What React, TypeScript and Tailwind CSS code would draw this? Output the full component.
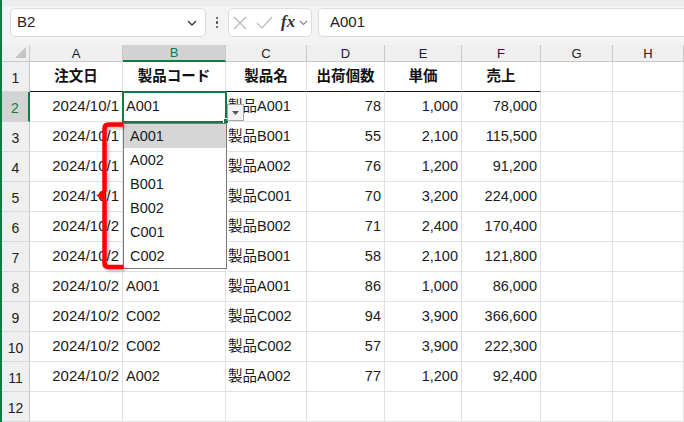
import React from "react";

const colWidths = ["w-[93px]", "w-[103px]", "w-[81px]", "w-[78px]", "w-[77px]", "w-[79px]", "w-[72px]", "w-[71px]"];
const letters = ["A", "B", "C", "D", "E", "F", "G", "H"];
const align = [
  "justify-end pr-[3px] text-[15px]",
  "justify-start pl-[3px] text-[14.5px]",
  "justify-start pl-[2px] text-[14.5px]",
  "justify-end pr-[3px] text-[14.5px]",
  "justify-end pr-[3px] text-[14.5px]",
  "justify-end pr-[3px] text-[14.5px]",
  "",
  "",
];

const header = ["注文日", "製品コード", "製品名", "出荷個数", "単価", "売上"];
const data: string[][] = [
  ["2024/10/1", "A001", "製品A001", "78", "1,000", "78,000"],
  ["2024/10/1", "", "製品B001", "55", "2,100", "115,500"],
  ["2024/10/1", "", "製品A002", "76", "1,200", "91,200"],
  ["2024/10/1", "", "製品C001", "70", "3,200", "224,000"],
  ["2024/10/2", "", "製品B002", "71", "2,400", "170,400"],
  ["2024/10/2", "", "製品B001", "58", "2,100", "121,800"],
  ["2024/10/2", "A001", "製品A001", "86", "1,000", "86,000"],
  ["2024/10/2", "C002", "製品C002", "94", "3,900", "366,600"],
  ["2024/10/2", "C002", "製品C002", "57", "3,900", "222,300"],
  ["2024/10/2", "A002", "製品A002", "77", "1,200", "92,400"],
  [],
];

const listItems = ["A001", "A002", "B001", "B002", "C001", "C002"];

function Toolbar() {
  return (
    <div className="h-[45px] shrink-0 bg-[#f3f3f3] border-t-[6px] border-[#ececec] flex items-start pt-[2px]">
      <div className="shrink-0 ml-[8px] w-[196px] h-[29px] bg-white border border-[#dcdcdc] rounded-[5px] flex items-center pl-[6px] pr-[8px] justify-between">
        <span className="text-[15px] text-[#222]">B2</span>
        <svg width="10" height="6" viewBox="0 0 10 6">
          <path d="M1 1 L5 5 L9 1" fill="none" stroke="#333" strokeWidth="1.3" />
        </svg>
      </div>
      <div className="shrink-0 w-[22px] h-[29px] flex flex-col items-center justify-center gap-[2px]">
        <span className="w-[2.5px] h-[2.5px] rounded-full bg-[#444]" />
        <span className="w-[2.5px] h-[2.5px] rounded-full bg-[#444]" />
        <span className="w-[2.5px] h-[2.5px] rounded-full bg-[#444]" />
      </div>
      <div className="shrink-0 w-[84px] h-[29px] bg-white border border-[#dcdcdc] rounded-[5px] flex items-center">
        <svg className="ml-[4px] shrink-0" width="14" height="14" viewBox="0 0 14 14">
          <path d="M1 1 L13 13 M13 1 L1 13" stroke="#b8b8b8" strokeWidth="1.2" />
        </svg>
        <svg className="ml-[9px] shrink-0" width="17" height="13" viewBox="0 0 17 13">
          <path d="M1 7 L6 12 L16 1" fill="none" stroke="#b8b8b8" strokeWidth="1.2" />
        </svg>
        <span className="ml-[8px] text-[17px] leading-none italic font-semibold text-[#333] font-['Liberation_Serif',serif] -mt-[2px]">
          fx
        </span>
        <svg className="ml-[4px] shrink-0" width="9" height="6" viewBox="0 0 9 6">
          <path d="M1 1 L4.5 4.5 L8 1" fill="none" stroke="#888" strokeWidth="1.1" />
        </svg>
      </div>
      <div className="shrink-0 ml-[6px] w-[380px] h-[29px] bg-white border border-[#dcdcdc] rounded-l-[5px] flex items-center pl-[11px]">
        <span className="text-[15px] text-[#222]">A001</span>
      </div>
    </div>
  );
}

function ColumnHeader() {
  return (
    <div className="h-[17px] shrink-0 flex">
      <div className="shrink-0 w-[28px] h-full bg-[#efefef] border-r border-b border-[#c8c8c8] relative">
        <svg className="absolute right-[3px] bottom-[3px]" width="11" height="11" viewBox="0 0 11 11">
          <path d="M11 0 L11 11 L0 11 Z" fill="#c4c4c4" />
        </svg>
      </div>
      {letters.map((l, i) =>
        i === 1 ? (
          <div
            key={l}
            className={`${colWidths[i]} shrink-0 h-full bg-[#d3d3d3] border-r border-[#c8c8c8] border-b-2 border-b-[#107c41] flex items-center justify-center pt-[1px] text-[13px] text-[#107c41]`}
          >
            {l}
          </div>
        ) : (
          <div
            key={l}
            className={`${colWidths[i]} shrink-0 h-full bg-[#efefef] border-r border-b border-[#c8c8c8] flex items-center justify-center pt-[2px] text-[13px] text-[#222]`}
          >
            {l}
          </div>
        )
      )}
    </div>
  );
}

function Row({ n, cells, isHeader }: { n: number; cells: string[]; isHeader?: boolean }) {
  const selected = n === 2;
  return (
    <div className="h-[30px] shrink-0 flex">
      {selected ? (
        <div className="shrink-0 w-[28px] h-full bg-[#d3d3d3] border-r-2 border-r-[#107c41] border-b border-b-[#d4d4d4] flex items-end justify-center pb-[2px] text-[14px] text-[#107c41]">
          {n}
        </div>
      ) : (
        <div className="shrink-0 w-[28px] h-full bg-[#efefef] border-r border-r-[#c8c8c8] border-b border-b-[#d9d9d9] flex items-end justify-center pb-[2px] text-[14px] text-[#222]">
          {n}
        </div>
      )}
      {colWidths.map((w, i) => {
        const text = cells[i] ?? "";
        if (isHeader) {
          return (
            <div
              key={i}
              className={`${w} shrink-0 h-full border-r border-r-[#e1e1e1] border-b ${
                i < 6 ? "border-b-[#111]" : "border-b-[#e1e1e1]"
              } flex items-center justify-center text-[14.5px] font-bold text-[#111]`}
            >
              {text}
            </div>
          );
        }
        return (
          <div
            key={i}
            className={`${w} shrink-0 h-full border-r border-b border-[#e1e1e1] flex items-center whitespace-nowrap overflow-hidden text-[#1a1a1a] ${align[i]}`}
          >
            {text}
          </div>
        );
      })}
    </div>
  );
}

export default function App() {
  return (
    <div className="relative w-[684px] h-[422px] overflow-hidden bg-white font-['Liberation_Sans','Noto_Sans_CJK_JP',sans-serif]">
      <div className="w-full h-full border-l-2 border-[#107c41] flex flex-col">
        <Toolbar />
        <ColumnHeader />
        <Row n={1} cells={header} isHeader />
        {data.map((r, i) => (
          <Row key={i} n={i + 2} cells={r} />
        ))}
      </div>

      {/* active cell selection */}
      <div className="absolute left-[122px] top-[91px] w-[105px] h-[32px] border-2 border-[#107c41]" />
      <div className="absolute left-[223px] top-[118px] w-[6px] h-[6px] bg-[#107c41] border border-white" />

      {/* dropdown button */}
      <div className="absolute left-[227px] top-[104px] w-[17px] h-[17px] bg-[#f3f3f3] border border-[#a8a8a8] flex items-center justify-center">
        <svg width="7" height="4" viewBox="0 0 7 4">
          <path d="M0 0 L7 0 L3.5 4 Z" fill="#555" />
        </svg>
      </div>

      {/* dropdown list */}
      <div className="absolute left-[123px] top-[123px] w-[104px] h-[146px] bg-white border border-[#7a7a7a] flex flex-col">
        {listItems.map((t, i) => (
          <div
            key={t}
            className={`h-[24px] flex items-center pl-[6px] pt-[1px] text-[14.5px] text-[#1a1a1a] ${i === 0 ? "bg-[#d6d6d6]" : ""}`}
          >
            {t}
          </div>
        ))}
      </div>

      {/* red bracket annotation */}
      <svg className="absolute left-[94px] top-[118px]" width="34" height="158" viewBox="0 0 34 158">
        <defs>
          <filter id="sh" x="-50%" y="-10%" width="200%" height="130%">
            <feDropShadow dx="2" dy="2" stdDeviation="1.5" floodColor="#000" floodOpacity="0.25" />
          </filter>
        </defs>
        <path
          d="M29 6.5 H14.5 Q10.5 6.5 10.5 10.5 V72 Q10.5 75 6.5 77.5 Q10.5 80 10.5 83 V145 Q10.5 149 14.5 149 H29"
          fill="none"
          stroke="#ff0000"
          strokeWidth="4.5"
          filter="url(#sh)"
        />
      </svg>
    </div>
  );
}
